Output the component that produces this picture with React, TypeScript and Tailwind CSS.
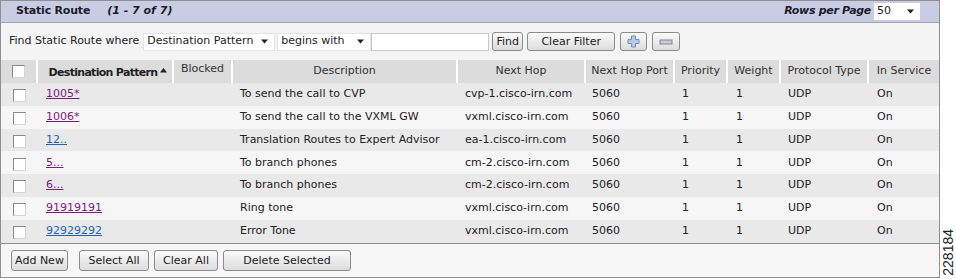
import React from 'react';

type Route = {
  pattern: string;
  visited: boolean;
  description: string;
  hop: string;
};

const routes: Route[] = [
  { pattern: '1005*', visited: true, description: 'To send the call to CVP', hop: 'cvp-1.cisco-irn.com' },
  { pattern: '1006*', visited: true, description: 'To send the call to the VXML GW', hop: 'vxml.cisco-irn.com' },
  { pattern: '12..', visited: false, description: 'Translation Routes to Expert Advisor', hop: 'ea-1.cisco-irn.com' },
  { pattern: '5...', visited: true, description: 'To branch phones', hop: 'cm-2.cisco-irn.com' },
  { pattern: '6...', visited: true, description: 'To branch phones', hop: 'cm-2.cisco-irn.com' },
  { pattern: '91919191', visited: true, description: 'Ring tone', hop: 'vxml.cisco-irn.com' },
  { pattern: '92929292', visited: false, description: 'Error Tone', hop: 'vxml.cisco-irn.com' },
];

const widths = [36, 136, 59, 225, 128, 89, 53, 53, 88, 71];

function Check() {
  return (
    <span className="inline-block w-[13px] h-[13px] bg-white border border-t-[#8a8a8a] border-l-[#8a8a8a] border-r-[#d4d4d4] border-b-[#d4d4d4] align-middle" />
  );
}

function Arrow() {
  return (
    <svg width="9" height="5" viewBox="0 0 9 5" className="shrink-0">
      <path d="M1 0.5 H8 L4.5 4.5 Z" fill="#222" />
    </svg>
  );
}

function Btn({ children, className = '' }: { children: React.ReactNode; className?: string }) {
  return (
    <button
      className={`h-[21px] border border-[#8c8c8c] rounded-[3px] bg-gradient-to-b from-[#fbfbfb] to-[#dcdcdc] text-[#222] text-[11px] leading-none ${className}`}
    >
      {children}
    </button>
  );
}

function Select({ label, width }: { label: string; width: string }) {
  return (
    <div className={`h-[18px] ${width} bg-white border border-[#e4e4e4] flex items-center justify-between pl-[3px] pr-[5px]`}>
      <span>{label}</span>
      <Arrow />
    </div>
  );
}

export default function App() {
  return (
    <div className="w-[956px] h-[279px] bg-white flex font-['DejaVu_Sans',Verdana,sans-serif] text-[11px] text-[#222]">
      <div className="w-[940px] h-[278px] border border-[#8f8f8f] flex flex-col">
        {/* title bar */}
        <div className="h-[22px] bg-[#c9cde3] border-b border-[#9fa3b8] flex items-center pl-[15px] pr-[19px] shrink-0">
          <span className="font-bold text-[#1c1c2c] tracking-[-0.2px]">Static Route</span>
          <span className="font-bold italic text-[#1c1c2c] ml-[17px]">(1 - 7 of 7)</span>
          <span className="ml-auto font-bold italic text-[#1c1c2c] tracking-[-0.3px]">Rows per Page</span>
          <div className="ml-[3px] h-[17px] w-[46px] bg-white flex items-center justify-between pl-[3px] pr-[5px]">
            <span>50</span>
            <Arrow />
          </div>
        </div>

        {/* filter row */}
        <div className="h-[37px] bg-[#f4f4f4] flex items-center pl-[8px] gap-[2px] shrink-0">
          <span className="mr-[2px]">Find Static Route where</span>
          <Select label="Destination Pattern" width="w-[132px]" />
          <Select label="begins with" width="w-[94px]" />
          <div className="h-[18px] w-[118px] bg-white border border-[#c8c8c8] -ml-[2px]" />
          <Btn className="w-[31px] ml-[1px] !h-[19px]">Find</Btn>
          <Btn className="w-[88px] ml-[2px] !h-[19px]">Clear Filter</Btn>
          <Btn className="w-[27px] ml-[3px] !h-[19px] flex items-center justify-center">
            <svg width="13" height="13" viewBox="0 0 13 13">
              <path d="M4.5 1 H8.5 V4.5 H12 V8.5 H8.5 V12 H4.5 V8.5 H1 V4.5 H4.5 Z" fill="#b4cbec" stroke="#7890b4" strokeWidth="1" />
            </svg>
          </Btn>
          <Btn className="w-[28px] ml-[3px] !h-[19px] flex items-center justify-center">
            <svg width="14" height="6" viewBox="0 0 14 6">
              <rect x="1" y="1" width="12" height="4" fill="#c8ccd4" stroke="#7e8696" strokeWidth="1" />
            </svg>
          </Btn>
        </div>

        {/* table */}
        <table className="table-fixed border-collapse w-[938px] shrink-0">
          <colgroup>
            {widths.map((w, i) => (
              <col key={i} style={{ width: w }} />
            ))}
          </colgroup>
          <thead>
            <tr className="h-[23px] bg-[#dcdcdc] text-[#333]">
              <th className="border-r-2 border-white font-normal">
                <Check />
              </th>
              <th className="border-r-2 border-white font-bold text-[#222]">
                <span className="inline-flex items-center gap-[3px] pt-[4px] pl-[6px] tracking-[-0.7px]">
                  Destination Pattern
                  <svg width="7" height="5" viewBox="0 0 7 5" className="-mt-[6px]">
                    <path d="M0 4.5 H7 L3.5 0 Z" fill="#222" />
                  </svg>
                </span>
              </th>
              <th className="border-r-2 border-white font-normal pb-[4px]">Blocked</th>
              <th className="border-r-2 border-white font-normal">Description</th>
              <th className="border-r-2 border-white font-normal">Next Hop</th>
              <th className="border-r-2 border-white font-normal">Next Hop Port</th>
              <th className="border-r-2 border-white font-normal">Priority</th>
              <th className="border-r-2 border-white font-normal">Weight</th>
              <th className="border-r-2 border-white font-normal">Protocol Type</th>
              <th className="font-normal">In Service</th>
            </tr>
          </thead>
          <tbody>
            {routes.map((r, i) => (
              <tr key={r.pattern} className={`h-[22.8px] ${i % 2 === 0 ? 'bg-[#e9e9e9]' : 'bg-[#f6f6f6]'}`}>
                <td className="text-center pt-[3px]">
                  <Check />
                </td>
                <td className="pl-[9px]">
                  <a
                    className={`underline ${r.visited ? 'text-[#7d1a7d]' : 'text-[#1f64b4]'}`}
                  >
                    {r.pattern}
                  </a>
                </td>
                <td />
                <td className="pl-[8px] whitespace-nowrap">{r.description}</td>
                <td className="pl-[8px] whitespace-nowrap">{r.hop}</td>
                <td className="pl-[7px]">5060</td>
                <td className="pl-[8px]">1</td>
                <td className="pl-[9px]">1</td>
                <td className="pl-[8px]">UDP</td>
                <td className="pl-[9px]">On</td>
              </tr>
            ))}
          </tbody>
        </table>

        {/* footer */}
        <div className="flex-1 bg-[#f6f6f6] border-t border-[#8f8f8f] flex items-center pl-[10px] gap-[5px]">
          <Btn className="w-[57px]">Add New</Btn>
          <Btn className="w-[70px] ml-[6px]">Select All</Btn>
          <Btn className="w-[64px]">Clear All</Btn>
          <Btn className="w-[128px]">Delete Selected</Btn>
        </div>
      </div>

      <div className="flex-1 flex items-end justify-center pb-[3px]">
        <span className="[writing-mode:vertical-rl] rotate-180 font-['Liberation_Sans',Arial,sans-serif] text-[14px] leading-none text-[#222]">
          228184
        </span>
      </div>
    </div>
  );
}
